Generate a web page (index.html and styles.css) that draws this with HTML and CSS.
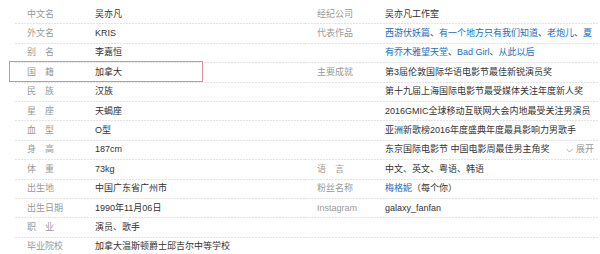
FILE: index.html
```html
<!DOCTYPE html>
<html lang="zh-CN">
<head>
<meta charset="utf-8">
<title>基本信息</title>
<link rel="stylesheet" href="styles.css">
</head>
<body>
<div class="info">
  <dl class="col">
    <div class="row"><dt>中文名</dt><dd>吴亦凡</dd></div>
    <div class="row"><dt>外文名</dt><dd>KRIS</dd></div>
    <div class="row"><dt>别名</dt><dd>李嘉恒</dd></div>
    <div class="row"><dt>国籍</dt><dd>加拿大</dd></div>
    <div class="row"><dt>民族</dt><dd>汉族</dd></div>
    <div class="row"><dt>星座</dt><dd>天蝎座</dd></div>
    <div class="row"><dt>血型</dt><dd>O型</dd></div>
    <div class="row"><dt>身高</dt><dd>187cm</dd></div>
    <div class="row"><dt>体重</dt><dd>73kg</dd></div>
    <div class="row"><dt>出生地</dt><dd>中国广东省广州市</dd></div>
    <div class="row"><dt>出生日期</dt><dd>1990年11月06日</dd></div>
    <div class="row"><dt>职业</dt><dd>演员、歌手</dd></div>
    <div class="row"><dt>毕业院校</dt><dd>加拿大温斯顿爵士邱吉尔中等学校</dd></div>
  </dl>
  <dl class="col">
    <div class="row"><dt>经纪公司</dt><dd>吴亦凡工作室</dd></div>
    <div class="row"><dt>代表作品</dt><dd><span class="line"><a>西游伏妖篇</a>、<a>有一个地方只有我们知道</a>、<a>老炮儿</a>、<a>夏</a></span><span class="line"><a>有乔木雅望天堂</a>、<a>Bad Girl</a>、<a>从此以后</a></span></dd></div>
    <div class="row"><dt>主要成就</dt><dd>
      <span class="line">第3届伦敦国际华语电影节最佳新锐演员奖</span>
      <span class="line">第十九届上海国际电影节最受媒体关注年度新人奖</span>
      <span class="line">2016GMIC全球移动互联网大会内地最受关注男演员</span>
      <span class="line">亚洲新歌榜2016年度盛典年度最具影响力男歌手</span>
      <span class="line flexline"><span>东京国际电影节 中国电影周最佳男主角奖</span><span class="more"><svg width="7" height="5" viewBox="0 0 7 5"><path d="M0.5 1 L3.5 4 L6.5 1" fill="none" stroke="#aaa" stroke-width="1"/></svg>展开</span></span>
    </dd></div>
    <div class="row"><dt>语言</dt><dd>中文、英文、粤语、韩语</dd></div>
    <div class="row"><dt>粉丝名称</dt><dd><a>梅格妮</a>（每个你）</dd></div>
    <div class="row"><dt>Instagram</dt><dd>galaxy_fanfan</dd></div>
    <div class="row"><dt></dt><dd></dd></div>
    <div class="row"><dt></dt><dd></dd></div>
  </dl>
  <div class="mark"></div>
</div>
</body>
</html>
```
FILE: styles.css
```css
html, body {
  margin: 0;
  padding: 0;
  background: #fff;
}
body {
  width: 600px;
  height: 254px;
  overflow: hidden;
  font-family: "Liberation Sans", "Noto Sans CJK SC", sans-serif;
  font-size: 9px;
  color: #333;
}
.info {
  position: relative;
  display: grid;
  grid-template-columns: 290px 293px;
  padding: 4.6px 0 0 15px;
}
.col {
  margin: 0;
  background-image:
    repeating-linear-gradient(to right, transparent 0 2px, #fff 2px 3px),
    repeating-linear-gradient(to bottom, transparent 0 18.4px, #e3e3e3 18.4px 19.4px);
}
.row {
  display: flex;
  line-height: 19.4px;
  padding-left: 12px;
}
dt {
  width: 27px;
  margin-right: 41px;
  color: #999;
  white-space: nowrap;
  text-align: justify;
  text-align-last: justify;
  min-height: 19.4px;
}
dd {
  margin: 0;
  flex: 1;
  white-space: nowrap;
  min-height: 19.4px;
}
.line {
  display: block;
  height: 19.4px;
}
.flexline {
  display: flex;
  justify-content: space-between;
  padding-right: 4px;
}
.more {
  color: #999;
  display: flex;
  align-items: center;
  gap: 3px;
}
a {
  color: #136ec2;
  text-decoration: none;
}
.mark {
  position: absolute;
  left: 9px;
  top: 61px;
  width: 192px;
  height: 19px;
  border: 1px solid #d8909e;
}
```
